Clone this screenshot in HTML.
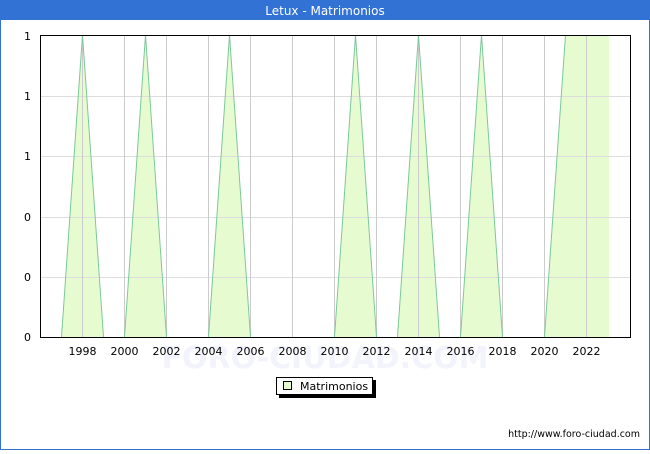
<!DOCTYPE html><html><head><style>body{margin:0;width:650px;height:450px;overflow:hidden;font-family:"DejaVu Sans","Liberation Sans",sans-serif;background:#fff}</style></head><body>
<svg width="650" height="450" xmlns="http://www.w3.org/2000/svg" font-family="DejaVu Sans, Liberation Sans, sans-serif">
<rect x="0" y="0" width="650" height="450" fill="#3272d4"/>
<rect x="1" y="20" width="648" height="429" fill="#fff"/>
<text x="325" y="15" fill="#fff" font-size="12" text-anchor="middle">Letux - Matrimonios</text>
<text x="325" y="368" fill="#f3f4fb" font-size="30" text-anchor="middle" font-weight="bold">FORO-CIUDAD.COM</text>
<polygon fill="#e6fcd0" stroke="none" points="61.5,337 82.5,35 103.5,337 124.5,337 145.5,35 166.5,337 208.5,337 229.5,35 250.5,337 334.5,337 355.5,35 376.5,337 397.5,337 418.5,35 439.5,337 460.5,337 481.5,35 502.5,337 544.5,337 565.5,35 609,35 609,337"/>
<g stroke="#ddd" stroke-width="1">
<line x1="40" y1="96.5" x2="630" y2="96.5"/><line x1="40" y1="156.5" x2="630" y2="156.5"/><line x1="40" y1="217.5" x2="630" y2="217.5"/><line x1="40" y1="277.5" x2="630" y2="277.5"/>
</g>
<g stroke="#ccc" stroke-width="1">
<line x1="82.5" y1="35" x2="82.5" y2="337"/><line x1="124.5" y1="35" x2="124.5" y2="337"/><line x1="166.5" y1="35" x2="166.5" y2="337"/><line x1="208.5" y1="35" x2="208.5" y2="337"/><line x1="250.5" y1="35" x2="250.5" y2="337"/><line x1="292.5" y1="35" x2="292.5" y2="337"/><line x1="334.5" y1="35" x2="334.5" y2="337"/><line x1="376.5" y1="35" x2="376.5" y2="337"/><line x1="418.5" y1="35" x2="418.5" y2="337"/><line x1="460.5" y1="35" x2="460.5" y2="337"/><line x1="502.5" y1="35" x2="502.5" y2="337"/><line x1="544.5" y1="35" x2="544.5" y2="337"/><line x1="586.5" y1="35" x2="586.5" y2="337"/>
</g>
<g fill="none" stroke="#7cc89a" stroke-width="1">
<polyline points="61.5,337 82.5,35 103.5,337"/><polyline points="124.5,337 145.5,35 166.5,337"/><polyline points="208.5,337 229.5,35 250.5,337"/><polyline points="334.5,337 355.5,35 376.5,337"/><polyline points="397.5,337 418.5,35 439.5,337"/><polyline points="460.5,337 481.5,35 502.5,337"/><polyline points="544.5,337 565.5,35"/>
</g>
<rect x="40.5" y="35.5" width="590" height="302" fill="none" stroke="#000" stroke-width="1"/>
<g font-size="11" fill="#000" text-anchor="end">
<text x="31" y="40">1</text><text x="31" y="100">1</text><text x="31" y="160">1</text><text x="31" y="221">0</text><text x="31" y="281">0</text><text x="31" y="341">0</text>
</g>
<g font-size="11" fill="#000" text-anchor="middle">
<text x="82.5" y="355">1998</text><text x="124.5" y="355">2000</text><text x="166.5" y="355">2002</text><text x="208.5" y="355">2004</text><text x="250.5" y="355">2006</text><text x="292.5" y="355">2008</text><text x="334.5" y="355">2010</text><text x="376.5" y="355">2012</text><text x="418.5" y="355">2014</text><text x="460.5" y="355">2016</text><text x="502.5" y="355">2018</text><text x="544.5" y="355">2020</text><text x="586.5" y="355">2022</text>
</g>
<rect x="279" y="380" width="97" height="18" fill="#000"/>
<rect x="276.5" y="377.5" width="96" height="17" fill="#fff" stroke="#000"/>
<rect x="283.5" y="381.5" width="8" height="8" fill="#e6fcd0" stroke="#000"/>
<text x="300" y="390" font-size="11">Matrimonios</text>
<text x="640" y="437" font-size="9.5" text-anchor="end">http://www.foro-ciudad.com</text>
</svg></body></html>
